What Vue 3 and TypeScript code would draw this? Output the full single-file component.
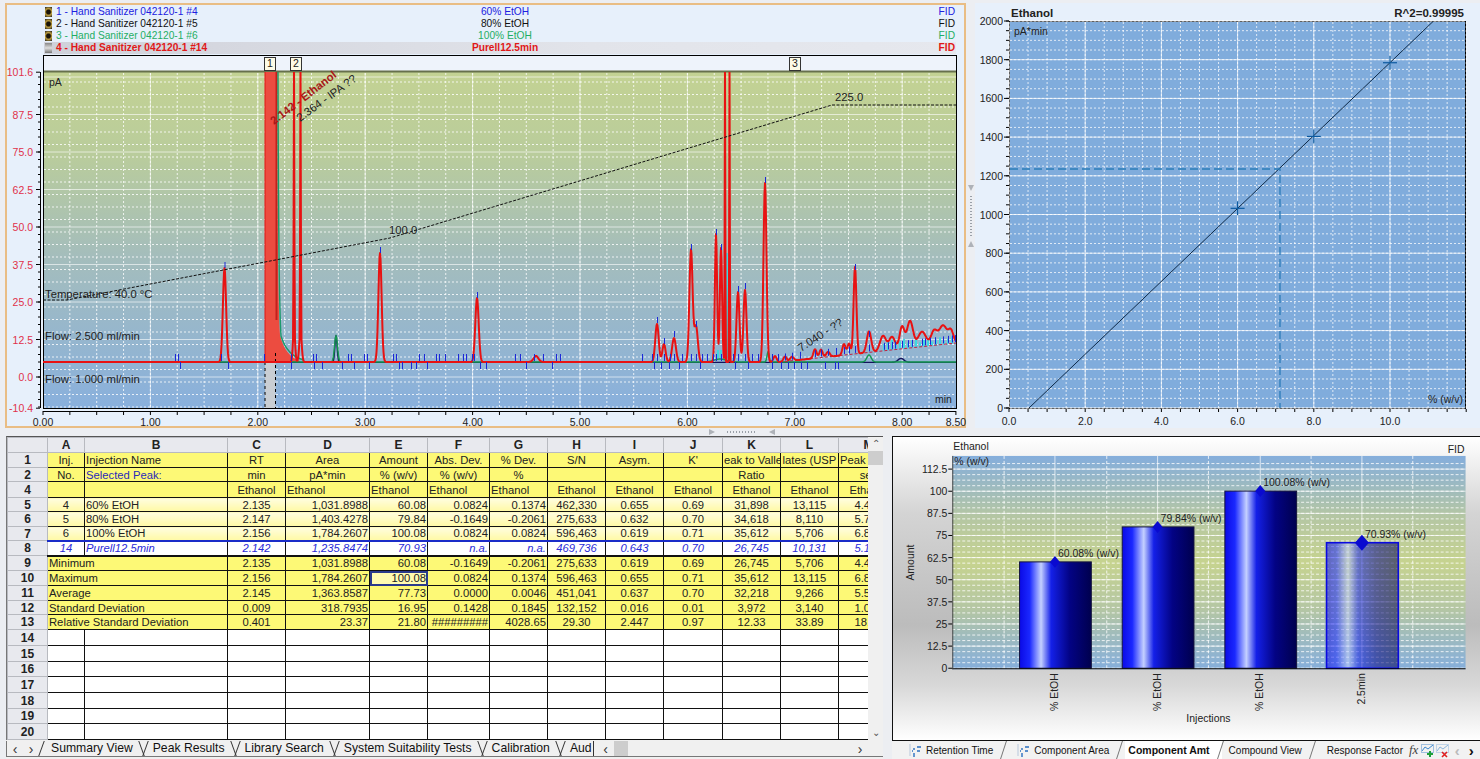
<script setup lang="ts">
type Peak = [number, number, number]

// chromatogram pixel mapping
const yOf = (v: number) => 377 - v * 3
const xOf = (m: number) => 43 + m * 107.4

const legend = [
  { name: '1 - Hand Sanitizer 042120-1 #4', mid: '60% EtOH', cls: 'blue' },
  { name: '2 - Hand Sanitizer 042120-1 #5', mid: '80% EtOH', cls: 'black' },
  { name: '3 - Hand Sanitizer 042120-1 #6', mid: '100% EtOH', cls: 'green' },
  { name: '4 - Hand Sanitizer 042120-1 #14', mid: 'Purell12.5min', cls: 'red' },
]

const yTicks = ['101.6', '87.5', '75.0', '62.5', '50.0', '37.5', '25.0', '12.5', '0.0', '-10.4']
const yVals = [101.6, 87.5, 75, 62.5, 50, 37.5, 25, 12.5, 0, -10.4]
const xLabels = [
  ['0.00', 0], ['1.00', 1], ['2.00', 2], ['3.00', 3], ['4.00', 4],
  ['5.00', 5], ['6.00', 6], ['7.00', 7], ['8.00', 8], ['8.50', 8.5],
] as [string, number][]

const range = (from: number, to: number, step: number) => {
  const out: number[] = []
  for (let v = from; v <= to + 0.001; v += step) out.push(v)
  return out
}

const chromMajorY = range(0, 100, 12.5).map(yOf)
const chromMinorY = range(-10, 100, 12.5 / 3).map(yOf)
const chromMajorX = range(1, 8, 1).map(xOf)
const chromMinorX = range(0.25, 8.25, 0.25).map(xOf)
const chromTicks = range(-10, 100, 2.5).map(yOf)
const chromXTicks = range(0, 8.5, 0.25).map(xOf)

const redPeaks: Peak[] = [
  [224.5, 94, 1.6], [294, 320, 0.3], [294, 30, 1.1], [300.5, 320, 0.3], [300.5, 30, 1.2], [380, 109, 1.6], [477, 64, 1.7],
  [536, 6, 2.4], [657, 38, 1.7], [664, 18, 1.6], [674, 24, 1.9], [691, 112, 1.6], [696, 36, 1.8],
  [716, 128, 1.1], [721, 114, 1.1], [725, 320, 0.3], [729.5, 320, 0.3], [738, 70, 1.5], [745, 72, 1.5],
  [765, 179, 1.5], [775, 6, 1.6], [785, 5, 1.6], [792, 4, 1.8], [815, 9, 1.6], [821, 8, 1.6], [828, 5, 1.8],
  [844, 11, 1.6], [849, 11, 1.5], [855, 87, 1.4], [869, 21, 2.2], [883, 15, 3], [892, 13, 3], [902, 22, 2.4],
  [910, 27, 3], [922, 15, 4], [934, 14, 3], [943, 19, 4], [951, 12, 2.5],
]

const baseAt = (x: number) => (x > 780 ? 362 - ((x - 780) / 176) * 19 : 362)

const trace = (peaks: Peak[], base: (x: number) => number) => {
  let d = ''
  for (let x = 43; x <= 956; x += 0.5) {
    let y = base(x)
    for (const [c, h, s] of peaks) y -= h * Math.exp(-((x - c) ** 2) / (2 * s * s))
    d += `${x === 43 ? 'M' : 'L'}${x},${Math.max(y, 60).toFixed(1)}`
  }
  return d
}

const redPath = trace(redPeaks, baseAt)
const greenPath = trace(
  [[336, 26, 1.5], [869, 7, 2.2], [768, 10, 1], [720, 3, 6]],
  () => 362,
)
const navyPath = trace([[336, 27, 1.1], [901, 4, 3]], () => 362.4)

const cyanBars: [number, number, number][] = [
  ...range(718, 730, 3).map((x): [number, number, number] => [x, 350, 358]),
  [727, 253, 358],
  ...range(884, 952, 4).map((x, i): [number, number, number] => [x, 344 - (i % 3) * 2 - i * 0.2, baseAt(x)]),
]

const tickUp = [175, 178, 221, 264, 291, 313, 316, 348, 351, 364, 367, 393, 396, 419, 424, 436, 439, 445, 458, 463, 466, 472, 474,
  515, 520, 534, 543, 556, 560, 642, 652, 657, 664, 670, 674, 682, 691, 696, 702, 707, 713, 716, 721, 733, 738, 745, 752, 758,
  772, 778, 785, 792, 800, 815, 821, 828, 836, 844, 849, 855, 869, 884, 888, 892, 895, 902, 908, 912, 922, 925, 930, 935, 943, 948, 952, 955]
const tickDown = [180, 228, 291, 314, 322, 342, 354, 369, 399, 402, 411, 416, 427, 480, 486, 526, 552, 654, 661, 669, 679, 700, 735, 748, 772, 781, 788, 794, 801, 807, 825, 835, 838]
const peakMarks: [number, number][] = [
  [224.5, 262], [380, 247], [477, 292], [657, 317], [664, 338], [674, 331], [691, 244], [696, 321], [716, 229], [721, 244],
  [738, 286], [745, 283], [765, 177], [855, 264], [869, 331],
]

// calibration plot
const calX = (v: number) => 1009 + v * 38.1
const calY = (v: number) => 408 - v * 0.1935
const calLabelsY = range(0, 2000, 200)
const calLabelsX = range(0, 12, 2).slice(0, 6)
const calMinorX = range(0, 12, 0.5)
const calMinorY = range(0, 2000, 50)
const calTicks = range(0, 2000, 50)
const calPoints = [[6, 1031.9], [8, 1403.4], [10, 1784.3]]

// bar chart
const barY = (v: number) => 669 - v * 1.776
const barMajor = range(0, 112.5, 12.5)
const barMinor = range(0, 118, 3.125)
const bars = [
  { x: 1018, v: 60.08, label: '60.08% (w/v)', name: '% EtOH' },
  { x: 1121, v: 79.84, label: '79.84% (w/v)', name: '% EtOH' },
  { x: 1224, v: 100.08, label: '100.08% (w/v)', name: '% EtOH' },
  { x: 1326, v: 70.93, label: '70.93% (w/v)', name: '2.5min', sel: true },
]

// table
const cols = ['A', 'B', 'C', 'D', 'E', 'F', 'G', 'H', 'I', 'J', 'K', 'L', 'M']
const colW = [37, 143, 58, 84, 58, 62, 58, 58, 58, 59, 58, 58, 60]

interface Row { no: string; h: number; kind: string; cells: string[]; span?: boolean }
const rows: Row[] = [
  { no: '1', h: 15, kind: 'hd', cells: ['Inj.', 'Injection Name', 'RT', 'Area', 'Amount', 'Abs. Dev.', '% Dev.', 'S/N', 'Asym.', "K'", 'eak to Valle', 'lates (USP', 'Peak Width'] },
  { no: '2', h: 14, kind: 'hd two', cells: ['No.', 'Selected Peak:', 'min', 'pA*min', '% (w/v)', '% (w/v)', '%', '', '', '', 'Ratio', '', 'sec'] },
  { no: '4', h: 16, kind: 'hd three', cells: ['', '', 'Ethanol', 'Ethanol', 'Ethanol', 'Ethanol', 'Ethanol', 'Ethanol', 'Ethanol', 'Ethanol', 'Ethanol', 'Ethanol', 'Ethanol'] },
  { no: '5', h: 14, kind: 'pale', cells: ['4', '60% EtOH', '2.135', '1,031.8988', '60.08', '0.0824', '0.1374', '462,330', '0.655', '0.69', '31,898', '13,115', '4.412'] },
  { no: '6', h: 15, kind: 'pale', cells: ['5', '80% EtOH', '2.147', '1,403.4278', '79.84', '-0.1649', '-0.2061', '275,633', '0.632', '0.70', '34,618', '8,110', '5.703'] },
  { no: '7', h: 14, kind: 'pale', cells: ['6', '100% EtOH', '2.156', '1,784.2607', '100.08', '0.0824', '0.0824', '596,463', '0.619', '0.71', '35,612', '5,706', '6.812'] },
  { no: '8', h: 15, kind: 'sel', cells: ['14', 'Purell12.5min', '2.142', '1,235.8474', '70.93', 'n.a.', 'n.a.', '469,736', '0.643', '0.70', '26,745', '10,131', '5.109'] },
  { no: '9', h: 15, kind: 'sum', span: true, cells: ['Minimum', '2.135', '1,031.8988', '60.08', '-0.1649', '-0.2061', '275,633', '0.619', '0.69', '26,745', '5,706', '4.412'] },
  { no: '10', h: 15, kind: 'sum', span: true, cells: ['Maximum', '2.156', '1,784.2607', '100.08', '0.0824', '0.1374', '596,463', '0.655', '0.71', '35,612', '13,115', '6.812'] },
  { no: '11', h: 15, kind: 'sum', span: true, cells: ['Average', '2.145', '1,363.8587', '77.73', '0.0000', '0.0046', '451,041', '0.637', '0.70', '32,218', '9,266', '5.512'] },
  { no: '12', h: 14, kind: 'sum', span: true, cells: ['Standard Deviation', '0.009', '318.7935', '16.95', '0.1428', '0.1845', '132,152', '0.016', '0.01', '3,972', '3,140', '1.024'] },
  { no: '13', h: 15, kind: 'sum', span: true, cells: ['Relative Standard Deviation', '0.401', '23.37', '21.80', '#########', '4028.65', '29.30', '2.447', '0.97', '12.33', '33.89', '18.23'] },
  ...[['14', 16], ['15', 16], ['16', 15], ['17', 16], ['18', 16], ['19', 15], ['20', 16]].map(([no, h]) => ({
    no: String(no),
    h: Number(h),
    kind: 'empty',
    cells: Array(13).fill(''),
  })),
]

// C, D, E... alignment by column index (A..M)
const align = (r: Row, i: number) => {
  const c = r.span ? i + 1 : i
  if (r.kind.startsWith('hd')) {
    if (c === 1) return 'l'
    if (r.kind === 'hd three' && (c === 3 || c === 4 || c === 5 || c === 6)) return 'l'
    return 'c'
  }
  if (r.span && i === 0) return 'l'
  if (c === 1) return 'l'
  if (c === 0 || c === 2 || c >= 7) return 'c'
  return 'r'
}

const sheetTabs = ['Summary View', 'Peak Results', 'Library Search', 'System Suitability Tests', 'Calibration', 'Aud']
const chartTabs = ['Retention Time', 'Component Area', 'Component Amt', 'Compound View', 'Response Factor']
</script>

<template>
  <div class="app">
    <div class="top">
      <section class="chrom">
        <div class="legend">
          <div v-for="(l, i) in legend" :key="l.name" class="leg-row" :class="[l.cls, { active: i === 3 }]">
            <i class="leg-ico"></i>
            <span class="leg-name">{{ l.name }}</span>
            <span class="leg-mid">{{ l.mid }}</span>
            <span class="leg-fid">FID</span>
          </div>
        </div>
        <svg class="chrom-svg" width="957" height="373" viewBox="7 53 957 373">
          <defs>
            <linearGradient id="plotbg" x1="0" y1="0" x2="0" y2="1">
              <stop offset="0" stop-color="#c3d293" />
              <stop offset="0.25" stop-color="#b9cc9c" />
              <stop offset="0.55" stop-color="#a4bdbc" />
              <stop offset="1" stop-color="#89b0dd" />
            </linearGradient>
            <clipPath id="plotclip"><rect x="43" y="72" width="913" height="336" /></clipPath>
          </defs>
          <rect x="43.5" y="55.5" width="913" height="353" fill="#eef3fb" stroke="#000" />
          <rect x="44" y="72" width="912" height="336" fill="url(#plotbg)" />
          <line x1="44" x2="956" y1="71.5" y2="71.5" stroke="#66704c" stroke-width="2" />

          <g stroke="#fff" stroke-opacity="0.8" stroke-width="1" stroke-dasharray="2 2">
            <line v-for="y in chromMinorY" :key="'my' + y" x1="44" x2="956" :y1="y" :y2="y" />
            <line v-for="x in chromMinorX" :key="'mx' + x" :x1="x" :x2="x" y1="73" y2="408" />
          </g>
          <g stroke="#fff" stroke-opacity="0.6" stroke-width="1">
            <line v-for="y in chromMajorY" :key="'My' + y" x1="44" x2="956" :y1="y" :y2="y" />
            <line v-for="x in chromMajorX" :key="'Mx' + x" :x1="x" :x2="x" y1="73" y2="408" />
          </g>

          <g clip-path="url(#plotclip)">
            <rect x="265" y="362" width="10.5" height="46" fill="#c9ced3" />
            <path d="M265 362 L265 72 L276.5 72 Q277.5 300 280 335 Q285 356 300 361 L300 362 Z" fill="#ec4c40" />
            <line x1="276.5" x2="276.5" y1="72" y2="320" stroke="#c4201c" stroke-width="2" />
            <path d="M278 72 Q278.5 300 281 336 Q287 356 304 360" fill="none" stroke="#1c9a6c" stroke-width="1.4" />
            <path d="M265 362 L265 72" stroke="#e01414" stroke-width="1" />
            <line x1="265" x2="265" y1="362" y2="408" stroke="#000" stroke-dasharray="3 3" />
            <line x1="275.5" x2="275.5" y1="353" y2="408" stroke="#000" stroke-dasharray="3 3" />

            <path :d="navyPath" fill="none" stroke="#14145c" stroke-width="1.4" />
            <path :d="greenPath" fill="none" stroke="#149a50" stroke-width="1.4" />
            <line v-for="(b, i) in cyanBars" :key="'c' + i" :x1="b[0]" :x2="b[0]" :y1="b[1]" :y2="b[2]" stroke="#3fd8e0" stroke-width="2" />
            <path d="M780 362 L956 343" fill="none" stroke="#c02040" stroke-dasharray="3 2" />
            <path :d="redPath" fill="none" stroke="#e81212" stroke-width="2" stroke-linejoin="round" />

            <g stroke="#1c28d8" stroke-width="1">
              <line v-for="x in tickUp" :key="'u' + x" :x1="x + 0.5" :x2="x + 0.5" :y1="baseAt(x) - 8" :y2="baseAt(x) - 1" />
              <line v-for="x in tickDown" :key="'d' + x" :x1="x + 0.5" :x2="x + 0.5" :y1="362" :y2="369" />
              <line v-for="p in peakMarks" :key="'p' + p[0]" :x1="p[0] + 0.5" :x2="p[0] + 0.5" :y1="p[1]" :y2="p[1] + 6" />
            </g>

            <path d="M43 300 L67 300 L390 238 L832 105 L956 105" fill="none" stroke="#111" stroke-dasharray="3 1.5" />
          </g>

          <text class="t" x="49" y="86">pA</text>
          <text class="t n" x="45" y="298">Temperature: 40.0 °C</text>
          <text class="t n" x="45" y="340">Flow: 2.500 ml/min</text>
          <text class="t n" x="45" y="383">Flow: 1.000 ml/min</text>
          <text class="t n" x="389" y="234">100.0</text>
          <text class="t n" x="835" y="101">225.0</text>
          <text class="t" x="935" y="403">min</text>
          <text class="t n dark-red" transform="translate(274 125) rotate(-37.5)">2.142 - Ethanol</text>
          <text class="t n" transform="translate(300 122) rotate(-36)">2.364 - IPA ??</text>
          <text class="t n" transform="translate(801 352) rotate(-33)">7.040 - ??</text>

          <g v-for="m in [[270, '1'], [296, '2'], [795, '3']]" :key="String(m[1])">
            <rect :x="Number(m[0]) - 5.5" y="57.5" width="11" height="13" fill="#fdfbe6" stroke="#333" />
            <text class="t" :x="m[0]" y="67" text-anchor="middle">{{ m[1] }}</text>
          </g>

          <line x1="40.5" x2="40.5" y1="72" y2="408" stroke="#000" />
          <g stroke="#000">
            <line v-for="y in chromTicks" :key="'ty' + y" x1="38" x2="40" :y1="y" :y2="y" />
            <line v-for="y in yVals" :key="'tY' + y" x1="36" x2="40" :y1="yOf(y)" :y2="yOf(y)" />
          </g>
          <text v-for="(t, i) in yTicks" :key="t" class="t ax" x="33" :y="yOf(yVals[i]) + 4" text-anchor="end">{{ t }}</text>

          <line x1="43" x2="956" y1="411.5" y2="411.5" stroke="#000" />
          <g stroke="#000">
            <line v-for="x in chromXTicks" :key="'tx' + x" :x1="x" :x2="x" y1="411" y2="415" />
          </g>
          <text v-for="l in xLabels" :key="l[0]" class="t" :x="xOf(l[1])" y="426" text-anchor="middle">{{ l[0] }}</text>
        </svg>
      </section>

      <div class="vsplit">
        <i class="tri"></i>
        <i class="dots"></i>
        <i class="tri up"></i>
      </div>

      <section class="cal">
        <svg width="505" height="425" viewBox="975 3 505 425">
          <text class="t bold big" x="1011" y="17">Ethanol</text>
          <text class="t bold big" x="1464" y="17" text-anchor="end">R^2=0.99995</text>
          <rect x="1009.5" y="21.5" width="456" height="387" fill="#80acdc" stroke="#000" />
          <g stroke="#fff" stroke-opacity="0.75" stroke-dasharray="2 2">
            <line v-for="x in calMinorX" :key="'cx' + x" :x1="calX(x)" :x2="calX(x)" y1="22" y2="408" />
            <line v-for="y in calMinorY" :key="'cy' + y" x1="1010" x2="1465" :y1="calY(y)" :y2="calY(y)" />
          </g>
          <g stroke="#fff" stroke-opacity="0.75">
            <line v-for="x in calLabelsX" :key="'cX' + x" :x1="calX(x)" :x2="calX(x)" y1="22" y2="408" />
            <line v-for="y in calLabelsY" :key="'cY' + y" x1="1010" x2="1465" :y1="calY(y)" :y2="calY(y)" />
          </g>
          <line x1="1029" y1="408" x2="1433" y2="21.5" stroke="#0e2a48" />
          <path d="M1010 169 H1280 V408" fill="none" stroke="#2a7cb8" stroke-width="1.3" stroke-dasharray="8 4" />
          <g stroke="#0c5aa0" stroke-width="1.2">
            <g v-for="p in calPoints" :key="p[0]">
              <line :x1="calX(p[0]) - 7" :x2="calX(p[0]) + 7" :y1="calY(p[1])" :y2="calY(p[1])" />
              <line :x1="calX(p[0])" :x2="calX(p[0])" :y1="calY(p[1]) - 7" :y2="calY(p[1]) + 7" />
            </g>
          </g>
          <text class="t" x="1014" y="35">pA*min</text>
          <text class="t" x="1428" y="403">% (w/v)</text>
          <g stroke="#000">
            <line v-for="y in calTicks" :key="'tc' + y" x1="1006" x2="1009" :y1="calY(y)" :y2="calY(y)" />
            <line v-for="y in calLabelsY" :key="'tC' + y" x1="1004" x2="1009" :y1="calY(y)" :y2="calY(y)" />
            <line v-for="x in calMinorX" :key="'tb' + x" :x1="calX(x)" :x2="calX(x)" y1="409" y2="412" />
          </g>
          <text v-for="y in calLabelsY" :key="'l' + y" class="t" x="1003" :y="calY(y) + 4" text-anchor="end">{{ y }}</text>
          <text v-for="x in calLabelsX" :key="'lx' + x" class="t" :x="calX(x)" y="425" text-anchor="middle">{{ x.toFixed(1) }}</text>
        </svg>
      </section>
    </div>

    <div class="hsplit">
      <i class="tri right"></i>
      <i class="hdots"></i>
      <i class="tri left"></i>
    </div>

    <div class="bottom">
      <section class="sheet">
        <div class="sheet-body">
          <div class="sheet-clip">
            <table class="grid">
              <colgroup>
                <col style="width: 40px" />
                <col v-for="(w, i) in colW" :key="i" :style="{ width: w + 'px' }" />
              </colgroup>
              <thead>
                <tr class="letters">
                  <th></th>
                  <th v-for="c in cols" :key="c">{{ c }}</th>
                </tr>
              </thead>
              <tbody>
                <tr v-for="r in rows" :key="r.no" :class="r.kind" :style="{ height: r.h + 'px' }">
                  <th class="rowno">{{ r.no }}</th>
                  <td
                    v-for="(c, i) in r.cells"
                    :key="i"
                    :colspan="r.span && i === 0 ? 2 : 1"
                    :class="[align(r, i), { picked: r.no === '10' && i === 3, navy: r.no === '2' && i === 1 }]"
                  >{{ c }}</td>
                </tr>
              </tbody>
            </table>
          </div>
          <div class="vbar">
            <span class="arrow">⌃</span>
            <i class="thumb"></i>
            <span class="arrow">⌄</span>
          </div>
        </div>
        <div class="sheet-tabs">
          <span class="nav">‹</span>
          <span class="nav">›</span>
          <span v-for="(t, i) in sheetTabs" :key="t" class="stab" :class="{ on: i === 0 }">{{ t }}</span>
          <div class="hbar">
            <span class="nav">‹</span>
            <i class="hthumb"></i>
            <span class="nav end">›</span>
          </div>
        </div>
      </section>

      <section class="bars">
        <svg class="bars-svg" width="588" height="304" viewBox="892 437 588 304">
          <defs>
            <linearGradient id="barbg" x1="0" y1="0" x2="0" y2="1">
              <stop offset="0" stop-color="#85aedc" />
              <stop offset="0.28" stop-color="#b4c6a4" />
              <stop offset="0.5" stop-color="#c6d38f" />
              <stop offset="0.72" stop-color="#b4c6a4" />
              <stop offset="1" stop-color="#85aedc" />
            </linearGradient>
            <linearGradient id="barfill" x1="0" y1="0" x2="1" y2="0">
              <stop offset="0" stop-color="#0a0ae6" />
              <stop offset="0.14" stop-color="#1a28ff" />
              <stop offset="0.3" stop-color="#c4d0ff" />
              <stop offset="0.44" stop-color="#1420e8" />
              <stop offset="0.7" stop-color="#030384" />
              <stop offset="1" stop-color="#00004e" />
            </linearGradient>
          </defs>
          <rect x="951" y="456" width="515" height="214" fill="url(#barbg)" />
          <g stroke="#fff" stroke-opacity="0.8" stroke-dasharray="3 2">
            <line v-for="v in barMinor" :key="'bm' + v" x1="951" x2="1466" :y1="barY(v)" :y2="barY(v)" />
            <line v-for="x in [1003, 1106, 1208, 1311, 1413]" :key="'bv' + x" :x1="x" :x2="x" y1="456" y2="670" />
          </g>
          <g stroke="#fff" stroke-opacity="0.7">
            <line v-for="v in barMajor" :key="'bM' + v" x1="951" x2="1466" :y1="barY(v)" :y2="barY(v)" />
            <line v-for="x in [1054, 1157, 1260, 1362]" :key="'bV' + x" :x1="x" :x2="x" y1="456" y2="670" />
          </g>
          <g v-for="b in bars" :key="b.label">
            <rect
              :x="b.x + 0.5"
              :y="barY(b.v)"
              width="72"
              :height="669 - barY(b.v)"
              fill="url(#barfill)"
              :fill-opacity="b.sel ? 0.55 : 1"
              :stroke="b.sel ? '#0a0ae0' : '#14143c'"
              :stroke-width="b.sel ? 1.6 : 1"
            />
            <path
              :d="b.sel
                ? `M${b.x + 36} ${barY(b.v) - 8} l7 8 l-7 8 l-7 -8 Z`
                : `M${b.x + 36} ${barY(b.v) - 6} l5 6 l-5 6 l-5 -6 Z`"
              fill="#0a0ad0"
            />
            <text class="t" :x="b.x + 39" :y="barY(b.v) - 5">{{ b.label }}</text>
            <text class="t" :transform="`translate(${b.x + 39} 674) rotate(-90)`" text-anchor="end">{{ b.name }}</text>
          </g>
          <text class="t" x="952" y="450">Ethanol</text>
          <text class="t" x="1465" y="453" text-anchor="end">FID</text>
          <text class="t" x="953" y="465">% (w/v)</text>
          <line x1="951" x2="1466" y1="669.5" y2="669.5" stroke="#000" />
          <line x1="951.5" x2="951.5" y1="456" y2="670" stroke="#444" />
          <g stroke="#000">
            <line v-for="v in barMajor" :key="'bt' + v" x1="947" x2="951" :y1="barY(v)" :y2="barY(v)" />
          </g>
          <text v-for="v in barMajor" :key="'bl' + v" class="t" x="946" :y="barY(v) + 4" text-anchor="end">{{ v }}</text>
          <text class="t" transform="translate(913 563) rotate(-90)" text-anchor="middle">Amount</text>
          <text class="t" x="1208" y="723" text-anchor="middle">Injections</text>
        </svg>
        <div class="chart-tabs">
          <span v-for="(t, i) in chartTabs" :key="t" class="ctab" :class="{ on: i === 2 }">
            <svg v-if="i < 2" class="mini" width="13" height="13" viewBox="0 0 13 13">
              <path d="M5 13V9M5 6V4M8 3h4M3 7h1M8 7h3" stroke="#2a6fc0" stroke-width="1.4" fill="none" />
              <path d="M1 0V12" stroke="#b8c8dc" fill="none" />
            </svg>
            {{ t }}
          </span>
          <span class="fx">fx</span>
          <svg width="13" height="15" viewBox="0 0 13 15">
            <path d="M1 8 4 4 7 6 12 2" stroke="#3a88d0" fill="none" />
            <rect x="0.5" y="1.5" width="12" height="8" fill="none" stroke="#a0c0e0" />
            <path d="M9 8v6M6 11h6" stroke="#1ea03a" stroke-width="2" />
          </svg>
          <svg class="del" width="13" height="15" viewBox="0 0 13 15">
            <path d="M1 8 4 4 7 6 12 2" stroke="#8ab4dc" fill="none" />
            <rect x="0.5" y="1.5" width="12" height="8" fill="none" stroke="#c0d4e8" />
            <path d="M6 9l5 5M11 9l-5 5" stroke="#e02020" stroke-width="1.6" />
          </svg>
          <span class="cnav dim">‹</span>
          <span class="cnav">›</span>
        </div>
      </section>
    </div>
  </div>
</template>

<style scoped>
.app {
  width: 1480px;
  height: 759px;
  overflow: hidden;
  background: #eceef2;
  font-family: "Liberation Sans", Arial, sans-serif;
  display: flex;
  flex-direction: column;
  padding-top: 3px;
  box-sizing: border-box;
}
.top {
  display: flex;
  height: 425px;
  padding-left: 5px;
}
.chrom {
  width: 961px;
  height: 425px;
  box-sizing: border-box;
  border: 2px solid #e9bd84;
  background: #e7f0fb;
}
.legend {
  height: 47px;
  padding: 1px 0 0 37px;
}
.leg-row {
  display: flex;
  align-items: center;
  height: 12px;
  font-size: 10.2px;
  line-height: 12px;
  width: 912px;
}
.leg-row.active {
  background: linear-gradient(90deg, #cfd1da, #e2e4ea 60%, #e6e8ee);
  font-weight: 700;
}
.leg-ico {
  width: 7px;
  height: 10px;
  margin: 0 4px 0 1px;
  background: radial-gradient(circle, #1a1408 30%, #c0a040 55%, #1a1a1a 100%);
}
.active .leg-ico {
  background: linear-gradient(#888, #ddd, #777);
}
.leg-name {
  width: 399px;
}
.leg-mid {
  width: 100px;
  text-align: center;
}
.leg-fid {
  margin-left: auto;
  padding-right: 1px;
}
.blue { color: #2020e0; }
.black { color: #111; }
.green { color: #1fae64; }
.red { color: #e01818; }
.chrom-svg,
.cal svg,
.bars-svg {
  display: block;
}
.chrom-svg {
  overflow: visible;
}
.t {
  font-family: "Liberation Sans", Arial, sans-serif;
  font-size: 10.5px;
  fill: #222;
}
.n {
  font-size: 11.3px;
}
.dark-red {
  fill: #a81818;
  font-weight: 700;
}
.ax {
  fill: #e0304a;
}
.bold {
  font-weight: 700;
}
.big {
  font-size: 11.5px;
}
.vsplit {
  width: 9px;
  display: flex;
  flex-direction: column;
  align-items: center;
  justify-content: center;
  gap: 5px;
}
.tri {
  width: 0;
  height: 0;
  border-left: 3px solid transparent;
  border-right: 3px solid transparent;
  border-top: 6px solid #aeb2b8;
}
.tri.up {
  border-top: 0;
  border-bottom: 6px solid #aeb2b8;
}
.tri.right {
  border: 0;
  border-top: 3px solid transparent;
  border-bottom: 3px solid transparent;
  border-left: 6px solid #aeb2b8;
}
.tri.left {
  border: 0;
  border-top: 3px solid transparent;
  border-bottom: 3px solid transparent;
  border-right: 6px solid #aeb2b8;
}
.dots {
  width: 2px;
  height: 40px;
  background: repeating-linear-gradient(#9aa0a8 0 1px, transparent 1px 3px);
}
.hdots {
  width: 30px;
  height: 2px;
  background: repeating-linear-gradient(90deg, #9aa0a8 0 1px, transparent 1px 3px);
}
.cal {
  width: 505px;
  height: 425px;
  background: #e7f0fb;
}
.hsplit {
  height: 8px;
  padding-left: 709px;
  display: flex;
  align-items: center;
  gap: 12px;
}
.bottom {
  display: flex;
  padding-left: 6px;
  gap: 9px;
  height: 323px;
}
.sheet {
  width: 877px;
  display: flex;
  flex-direction: column;
  background: #f0f0f0;
}
.sheet-body {
  display: flex;
  height: 304px;
  border-top: 1px solid #555;
  border-left: 1px solid #777;
  box-sizing: border-box;
}
.sheet-clip {
  width: 861px;
  overflow: hidden;
  background: #fff;
}
.grid {
  table-layout: fixed;
  border-collapse: collapse;
  width: 891px;
  font-size: 11.25px;
  color: #222;
}
.grid td,
.grid th {
  padding: 0 1px;
  white-space: nowrap;
  overflow: hidden;
  line-height: 12px;
  box-sizing: border-box;
}
.grid td {
  border: 1px solid #111;
}
.letters th {
  height: 15px;
  background: #e8e9ee;
  border: 1px solid #b8bac0;
  font-size: 12px;
  font-weight: 700;
  text-align: center;
  color: #222;
}
.rowno {
  background: #e8e9ee;
  border: 1px solid #b8bac0;
  font-size: 12px;
  font-weight: 700;
  text-align: center;
}
.hd td,
.sum td {
  background: #fdf976;
}
.pale td {
  background: linear-gradient(#fffde0, #fff9a4);
}
.sel td {
  background: #fff;
  color: #2a2ad8;
  font-style: italic;
  border-top: 2px solid #1a2cc8;
  border-bottom: 2px solid #111;
}
.empty td {
  background: #fff;
}
.l { text-align: left; }
.c { text-align: center; }
.r { text-align: right; }
.navy {
  color: #2a2ab8;
}
.grid td.picked {
  outline: 2px solid #2a3a8c;
  outline-offset: -2px;
  background: #fffbb0;
}
.vbar {
  width: 15px;
  background: #f0f0f0;
  display: flex;
  flex-direction: column;
  align-items: center;
  font-size: 10px;
  color: #555;
}
.arrow {
  height: 14px;
  line-height: 14px;
}
.thumb {
  width: 15px;
  background: #cdcdcd;
  flex: 0 0 14px;
  margin-bottom: auto;
}
.sheet-tabs {
  display: flex;
  align-items: center;
  height: 15px;
  margin-top: 1px;
  font-size: 12.2px;
  color: #111;
  border-left: 1px solid #777;
  border-bottom: 1px solid #777;
}
.nav {
  flex: none;
  width: 16px;
  text-align: center;
  color: #333;
  font-size: 14px;
  line-height: 14px;
}
.stab {
  position: relative;
  padding: 0 10px;
  line-height: 15px;
  height: 15px;
  white-space: nowrap;
}
.stab::before,
.stab::after {
  content: "";
  position: absolute;
  top: 0;
  bottom: 0;
  border-left: 1px solid #333;
}
.stab::before {
  left: 2px;
  transform: skewX(-20deg);
}
.stab::after {
  right: 1px;
  transform: skewX(20deg);
}
.stab.on {
  padding-left: 12px;
}
.stab:last-of-type {
  padding-right: 1px;
  border-right: 1px solid #333;
  margin-right: 4px;
}
.stab:last-of-type::after {
  display: none;
}
.hbar {
  flex: 1;
  display: flex;
  align-items: center;
  background: #f0f0f0;
  margin-right: 15px;
}
.hthumb {
  width: 14px;
  height: 15px;
  background: #cdcdcd;
}
.nav.end {
  margin-left: auto;
}
.bars {
  width: 588px;
  height: 323px;
  display: flex;
  flex-direction: column;
  background: #e8e8e8;
}
.bars-svg {
  border-top: 1px solid #111;
  border-left: 1px solid #111;
  box-sizing: border-box;
  background: linear-gradient(#fff, #d4d4d4 25%, #bcbcbc 62%, #d8d8d8 82%, #fff);
}
.chart-tabs {
  display: flex;
  align-items: center;
  height: 19px;
  font-size: 10px;
  color: #111;
  border-top: 1px solid #111;
  padding-left: 14px;
  background: #f2f2f2;
  box-sizing: border-box;
}
.ctab {
  display: inline-flex;
  align-items: center;
  gap: 4px;
  padding: 0 12px 0 3px;
  height: 18px;
  white-space: nowrap;
  position: relative;
  margin-right: 4px;
}
.ctab:nth-child(1) {
  margin-right: 9px;
}
.ctab:nth-child(4) {
  margin-right: 10px;
}
.ctab:nth-child(5) {
  padding-right: 4px;
  margin-right: 2px;
}
.ctab:nth-child(5)::after {
  display: none;
}
.ctab::after {
  content: "";
  position: absolute;
  right: 1px;
  top: 0;
  bottom: 0;
  border-right: 1px solid #777;
  transform: skewX(-18deg);
}
.ctab.on {
  font-weight: 700;
  font-size: 10.5px;
  background: #fff;
}
.mini {
  flex: none;
}
.fx {
  font-family: "Liberation Serif", serif;
  font-style: italic;
  font-size: 13px;
  margin-right: 3px;
  color: #444;
}
.del {
  margin-left: 2px;
}
.cnav {
  width: 12px;
  text-align: center;
  font-size: 15px;
  font-weight: 700;
  margin-left: 2px;
}
.cnav.dim {
  color: #bbb;
}
</style>

<style>
html,
body {
  margin: 0;
  overflow: hidden;
}
</style>
